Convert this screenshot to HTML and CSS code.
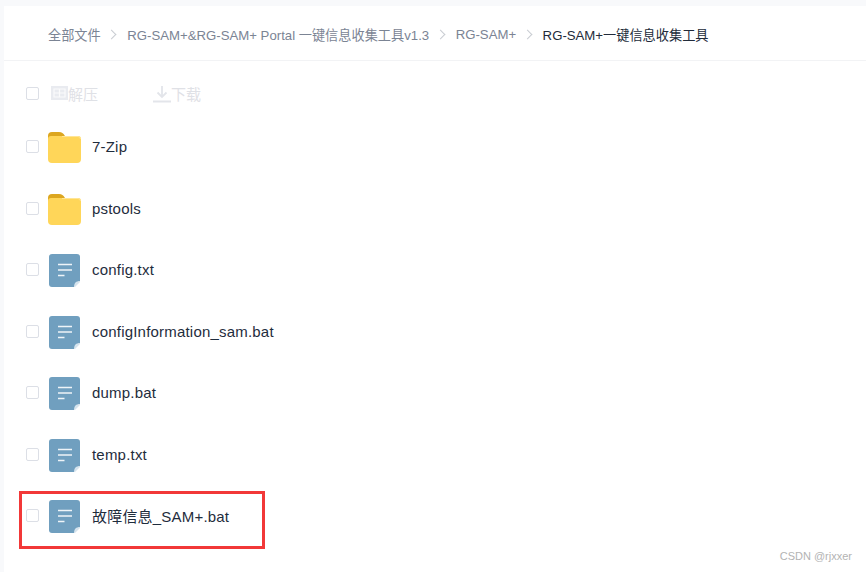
FILE: index.html
```html
<!DOCTYPE html>
<html lang="en">

<head>
    <meta charset="UTF-8">
    <meta name="viewport" content="width=device-width, initial-scale=1.0">
    <title>全部文件</title>
    <link rel="stylesheet" href="styles.css">
</head>

<body>
    <svg class="defs" width="0" height="0">
        <symbol id="folder" viewBox="0 0 33 31">
            <path d="M0 4a4 4 0 0 1 4-4h7c3 0 4 1 6 4v6H0z" fill="#dca61f" />
            <path d="M0 7a3 3 0 0 1 3-3h27a3 3 0 0 1 3 3v20a4 4 0 0 1-4 4H4a4 4 0 0 1-4-4z" fill="#ffd659" />
            <path d="M14 4.500h16a2.500 2.500 0 0 1 2.500 2.500" fill="none" stroke="#ffe596" />
        </symbol>
        <symbol id="file" viewBox="0 0 31 33">
            <path d="M3 0h25a3 3 0 0 1 3 3v24l-6 6H3a3 3 0 0 1-3-3V3a3 3 0 0 1 3-3z" fill="#709fbf" />
            <path d="M31 27v1l-5 5h-1c0-4 2-6 6-6z" fill="#d5e3ed" />
            <path d="M9 10.500h14M9 16h14M9 21.500h6.500" stroke="#eef4f8" stroke-width="1.600" fill="none" />
        </symbol>
    </svg>
    <div class="panel">
        <div class="crumbs">
            <span class="crumb">全部文件</span>
            <span class="sep"></span>
            <span class="crumb">RG-SAM+&amp;RG-SAM+ Portal 一键信息收集工具v1.3</span>
            <span class="sep"></span>
            <span class="crumb">RG-SAM+</span>
            <span class="sep"></span>
            <span class="crumb current">RG-SAM+一键信息收集工具</span>
        </div>
        <div class="toolbar">
            <span class="check"></span>
            <span class="tool unzip">
                <svg width="17" height="15" viewBox="0 0 17 15">
                    <path d="M0 0h17v14H0z" fill="#e9ebf0" />
                    <path d="M3 3h11v8H3zM8.500 3v8M3 7h11" fill="none" stroke="#fbfbfc" stroke-width="1.200" />
                </svg>解压
            </span>
            <span class="tool download">
                <svg width="18" height="18" viewBox="0 0 18 18">
                    <path d="M9 1v11M4.500 7.500 9 12l4.500-4.500" fill="none" stroke="#e3e5ea" stroke-width="1.800" />
                    <path d="M0 16.500h18" stroke="#e3e5ea" stroke-width="2" />
                </svg>下载
            </span>
        </div>
        <ul class="files">
            <li class="row"><span class="check"></span><svg class="icon folder"><use href="#folder" /></svg><span class="name">7-Zip</span></li>
            <li class="row"><span class="check"></span><svg class="icon folder"><use href="#folder" /></svg><span class="name">pstools</span></li>
            <li class="row"><span class="check"></span><svg class="icon doc"><use href="#file" /></svg><span class="name">config.txt</span></li>
            <li class="row"><span class="check"></span><svg class="icon doc"><use href="#file" /></svg><span class="name">configInformation_sam.bat</span></li>
            <li class="row"><span class="check"></span><svg class="icon doc"><use href="#file" /></svg><span class="name">dump.bat</span></li>
            <li class="row"><span class="check"></span><svg class="icon doc"><use href="#file" /></svg><span class="name">temp.txt</span></li>
            <li class="row marked"><span class="check"></span><svg class="icon doc"><use href="#file" /></svg><span class="name">故障信息_SAM+.bat</span></li>
        </ul>
    </div>
    <div class="watermark">CSDN @rjxxer</div>
</body>

</html>
```

FILE: styles.css
```css
html,
body {
    height: 100%;
}

body {
    margin: 0;
    overflow: hidden;
    padding: 6px 0 0 4px;
    box-sizing: border-box;
    background: #f8f9fb;
    color: #1f2d3d;
    font-family: "Liberation Sans", "Noto Sans CJK SC", sans-serif;
    font-size: 14px;
}

.defs {
    position: absolute;
}

.panel {
    height: 100%;
    background: #fff;
}

.crumbs {
    display: flex;
    align-items: center;
    height: 52px;
    padding: 2px 0 0 44px;
    border-bottom: 1px solid #f2f3f5;
    color: #7b8494;
    font-size: 13.200px;
}

.sep {
    width: 6px;
    height: 6px;
    margin: 0 12px 0 7.500px;
    border-top: 1.500px solid #c9ccd2;
    border-right: 1.500px solid #c9ccd2;
    transform: rotate(45deg);
}

.current {
    color: #222b3a;
}

.toolbar {
    display: flex;
    align-items: center;
    height: 45px;
    padding: 10px 0 0 22px;
    color: #dfe1e6;
    font-size: 15px;
}

.tool {
    display: flex;
    align-items: center;
}

.unzip {
    margin-left: 12px;
}

.download {
    margin-left: 55px;
}

.check {
    flex: none;
    width: 11px;
    height: 11px;
    border: 1px solid #dcdfe6;
    border-radius: 2px;
    background: #fff;
}

.files {
    margin: 0;
    padding: 0;
    list-style: none;
}

.row {
    position: relative;
    display: flex;
    align-items: center;
    height: 61.500px;
    padding-left: 22px;
}

.icon {
    flex: none;
    width: 33px;
    height: 33px;
    margin: 2px 0 0 9px;
}

.folder {
    height: 31px;
}

.doc {
    width: 31px;
    margin-left: 10px;
    margin-right: 1px;
}

.name {
    margin-left: 11px;
    font-size: 15px;
    letter-spacing: 0.200px;
}

/* red box drawn over the screenshot */
.marked::after {
    content: "";
    position: absolute;
    left: 15px;
    top: 6px;
    width: 240px;
    height: 52px;
    border: 3px solid #f23838;
}

.watermark {
    position: absolute;
    right: 14px;
    bottom: 10px;
    color: #b3b3b3;
    font-size: 11px;
}
```
